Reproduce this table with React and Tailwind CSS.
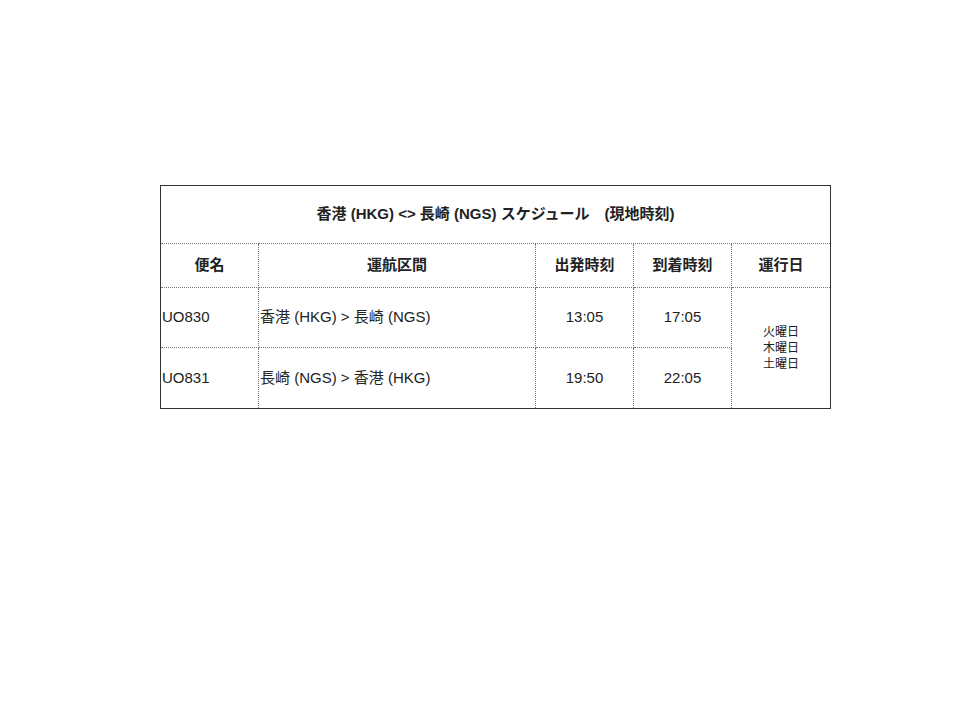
import React from "react";

const flights = [
  { no: "UO830", route: "香港 (HKG) > 長崎 (NGS)", dep: "13:05", arr: "17:05" },
  { no: "UO831", route: "長崎 (NGS) > 香港 (HKG)", dep: "19:50", arr: "22:05" },
];

export default function App() {
  return (
    <div
      className="w-[960px] h-[720px] bg-white text-[#222] pt-[185px] pl-[160px]"
      style={{ fontFamily: '"Liberation Sans", "Noto Sans CJK JP", sans-serif' }}
    >
      <table className="w-[670px] table-fixed border-collapse border border-[#333] text-[15px]">
        <colgroup>
          <col className="w-[98px]" />
          <col className="w-[277px]" />
          <col className="w-[98px]" />
          <col className="w-[98px]" />
          <col className="w-[99px]" />
        </colgroup>
        <thead>
          <tr className="h-[58px]">
            <th colSpan={5} className="font-bold text-center border-b border-dotted border-[#777]">
              香港 (HKG) &lt;&gt; 長崎 (NGS) スケジュール　(現地時刻)
            </th>
          </tr>
          <tr className="h-[44px]">
            <th className="font-bold text-center border border-dotted border-[#777]">便名</th>
            <th className="font-bold text-center border border-dotted border-[#777]">運航区間</th>
            <th className="font-bold text-center border border-dotted border-[#777]">出発時刻</th>
            <th className="font-bold text-center border border-dotted border-[#777]">到着時刻</th>
            <th className="font-bold text-center border border-dotted border-[#777]">運行日</th>
          </tr>
        </thead>
        <tbody>
          {flights.map((f, i) => (
            <tr key={f.no} className={i === 0 ? "h-[60px]" : "h-[61px]"}>
              <td className="text-left pl-[1px] border border-dotted border-[#777]">{f.no}</td>
              <td className="text-left pl-[1px] border border-dotted border-[#777]">{f.route}</td>
              <td className="text-center border border-dotted border-[#777]">{f.dep}</td>
              <td className="text-center border border-dotted border-[#777]">{f.arr}</td>
              {i === 0 && (
                <td rowSpan={2} className="text-center text-[12px] leading-[16px] border border-dotted border-[#777]">
                  火曜日
                  <br />
                  木曜日
                  <br />
                  土曜日
                </td>
              )}
            </tr>
          ))}
        </tbody>
      </table>
    </div>
  );
}
